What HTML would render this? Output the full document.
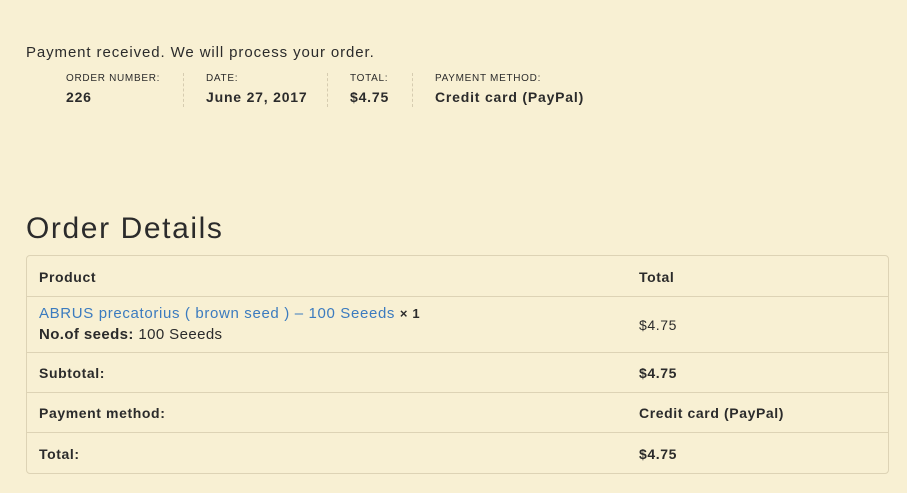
<!DOCTYPE html>
<html><head><style>
body{margin:0;width:907px;height:493px;background:#f8f0d3;font-family:"Liberation Sans",sans-serif;color:#2b2b2b;position:relative;overflow:hidden}
.a{position:absolute;white-space:nowrap}
.lab{font-size:10px;top:73px;letter-spacing:0.7px}
.val{font-size:14px;font-weight:bold;top:89px;letter-spacing:0.8px}
.sep{position:absolute;top:73px;height:34px;border-left:1px dashed #d6ccb0}
.tbl{position:absolute;left:26px;top:255px;width:861px;height:217px;border:1px solid #ddd3b5;border-radius:4px}
.hr{position:absolute;left:0;right:0;border-top:1px solid #ddd3b5}
.t{position:absolute;font-size:14px;font-weight:bold;white-space:nowrap;letter-spacing:0.6px}
</style></head><body>
<div class="a" style="left:26px;top:44px;font-size:15px;letter-spacing:0.9px">Payment received. We will process your order.</div>
<div class="a lab" style="left:66px">ORDER NUMBER:</div>
<div class="a val" style="left:66px">226</div>
<div class="sep" style="left:183px"></div>
<div class="a lab" style="left:206px">DATE:</div>
<div class="a val" style="left:206px">June 27, 2017</div>
<div class="sep" style="left:327px"></div>
<div class="a lab" style="left:350px">TOTAL:</div>
<div class="a val" style="left:350px">$4.75</div>
<div class="sep" style="left:412px"></div>
<div class="a lab" style="left:435px">PAYMENT METHOD:</div>
<div class="a val" style="left:435px">Credit card (PayPal)</div>
<div class="a" style="left:26px;top:212px;font-size:30px;letter-spacing:1.6px">Order Details</div>
<div class="tbl">
<div class="hr" style="top:40px"></div>
<div class="hr" style="top:96px"></div>
<div class="hr" style="top:136px"></div>
<div class="hr" style="top:176px"></div>
<div class="t" style="left:12px;top:13px">Product</div>
<div class="t" style="left:612px;top:13px">Total</div>
<div class="t" style="left:12px;top:49px;font-weight:normal;font-size:15px;color:#3b7bbf;letter-spacing:0.65px">ABRUS precatorius ( brown seed ) – 100 Seeeds <b style="color:#2b2b2b;font-size:13px">× 1</b></div>
<div class="t" style="left:12px;top:70px;font-size:15px;letter-spacing:0.4px">No.of seeds: <span style="font-weight:normal">100 Seeeds</span></div>
<div class="t" style="left:612px;top:61px;font-weight:normal">$4.75</div>
<div class="t" style="left:12px;top:109px">Subtotal:</div>
<div class="t" style="left:612px;top:109px">$4.75</div>
<div class="t" style="left:12px;top:149px">Payment method:</div>
<div class="t" style="left:612px;top:149px">Credit card (PayPal)</div>
<div class="t" style="left:12px;top:190px">Total:</div>
<div class="t" style="left:612px;top:190px">$4.75</div>
</div>
</body></html>
